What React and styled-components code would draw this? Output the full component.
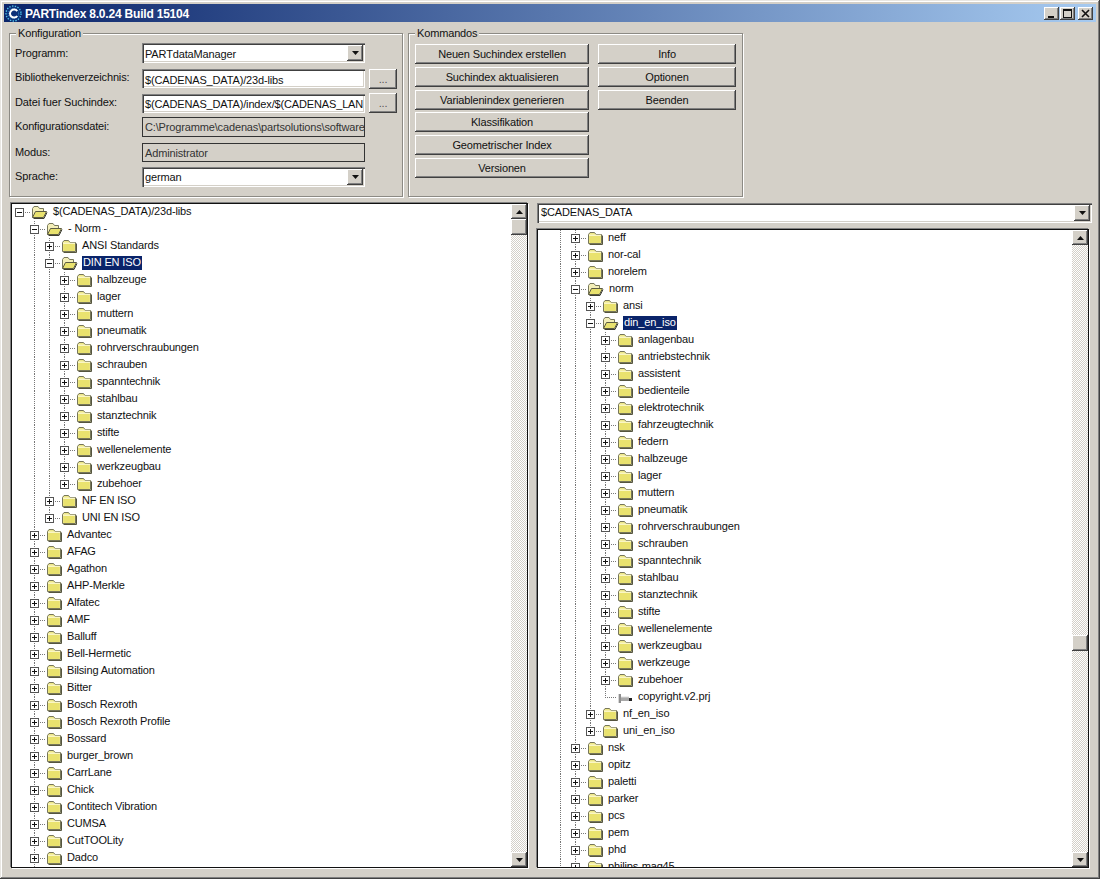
import React from "react";
import styled, { createGlobalStyle } from "styled-components";

const GlobalStyle = createGlobalStyle`
  html, body {
    margin: 0;
    padding: 0;
    overflow: hidden;
    background: #d4d0c8;
  }
  * {
    box-sizing: border-box;
  }
`;

const raised = `
  background: #d4d0c8;
  box-shadow: inset -1px -1px 0 #404040, inset 1px 1px 0 #fff, inset -2px -2px 0 #808080;
`;

const sunken = `
  background: #fff;
  box-shadow: inset 1px 1px 0 #808080, inset 2px 2px 0 #404040, inset -1px -1px 0 #fff, inset -2px -2px 0 #d4d0c8;
`;

const leftTree = [
  {
    name: "$(CADENAS_DATA)/23d-libs",
    open: true,
    more: true,
    children: [
      {
        name: "- Norm -",
        open: true,
        children: [
          { name: "ANSI Standards" },
          {
            name: "DIN EN ISO",
            open: true,
            selected: true,
            children: [
              "halbzeuge", "lager", "muttern", "pneumatik", "rohrverschraubungen", "schrauben", "spanntechnik",
              "stahlbau", "stanztechnik", "stifte", "wellenelemente", "werkzeugbau", "zubehoer",
            ].map((name) => ({ name })),
          },
          { name: "NF EN ISO" },
          { name: "UNI EN ISO" },
        ],
      },
      ...[
        "Advantec", "AFAG", "Agathon", "AHP-Merkle", "Alfatec", "AMF", "Balluff", "Bell-Hermetic",
        "Bilsing Automation", "Bitter", "Bosch Rexroth", "Bosch Rexroth Profile", "Bossard", "burger_brown",
        "CarrLane", "Chick", "Contitech Vibration", "CUMSA", "CutTOOLity", "Dadco",
      ].map((name) => ({ name })),
    ],
  },
];

const rightTree = [
  { name: "neff" },
  { name: "nor-cal" },
  { name: "norelem" },
  {
    name: "norm",
    open: true,
    children: [
      { name: "ansi" },
      {
        name: "din_en_iso",
        open: true,
        selected: true,
        children: [
          ...[
            "anlagenbau", "antriebstechnik", "assistent", "bedienteile", "elektrotechnik", "fahrzeugtechnik",
            "federn", "halbzeuge", "lager", "muttern", "pneumatik", "rohrverschraubungen", "schrauben",
            "spanntechnik", "stahlbau", "stanztechnik", "stifte", "wellenelemente", "werkzeugbau", "werkzeuge",
            "zubehoer",
          ].map((name) => ({ name })),
          { name: "copyright.v2.prj", file: true },
        ],
      },
      { name: "nf_en_iso" },
      { name: "uni_en_iso" },
    ],
  },
  ...["nsk", "opitz", "paletti", "parker", "pcs", "pem", "phd", "philips-mag45"].map((name) => ({ name })),
];

// turns the nested data into rows, keeping which ancestor lines carry on
const flatten = (nodes, guides, continues, isRoot) => {
  let rows = [];
  nodes.forEach((node, i) => {
    const last = i === nodes.length - 1 && !continues;
    rows.push({ ...node, guides, last, isRoot });
    if (node.children) {
      rows = rows.concat(flatten(node.children, [...guides, !last && !isRoot], node.more, false));
    }
  });
  return rows;
};

const Window = styled.div`
  width: 1100px;
  height: 879px;
  padding: 4px 4px 11px;
  display: flex;
  flex-direction: column;
  background: #d4d0c8;
  font-family: "Liberation Sans", Arial, sans-serif;
  font-size: 11px;
  letter-spacing: -0.15px;
  color: #111;
  box-shadow: inset -1px -1px 0 #404040, inset 1px 1px 0 #e8e6e2, inset -2px -2px 0 #808080, inset 2px 2px 0 #fff;
`;

const TitleBar = styled.div`
  height: 18px;
  display: flex;
  align-items: center;
  padding: 0 3px 0 1px;
  background: linear-gradient(to right, #0a246a, #a6caf0);
  color: #fff;
  font-size: 12px;
  font-weight: bold;
  letter-spacing: -0.2px;
`;

const TitleText = styled.div`
  margin: 2px 0 0 3px;
  flex: 1;
`;

const CaptionButton = styled.div`
  ${raised}
  width: 15px;
  height: 13px;
  margin-left: ${(p) => p.$gap}px;
  display: flex;
  align-items: center;
  justify-content: center;
`;

const TopArea = styled.div`
  display: flex;
  gap: 5px;
  margin: 11px 0 0 5px;
`;

const Group = styled.div`
  position: relative;
  width: ${(p) => p.$width}px;
  height: 164px;
  border: 1px solid #8c8a84;
  box-shadow: 1px 1px 0 #fff, inset 1px 1px 0 #fff;
`;

const Legend = styled.div`
  position: absolute;
  top: -7px;
  left: 6px;
  padding: 0 2px;
  line-height: 13px;
  background: #d4d0c8;
`;

const ConfigGrid = styled.div`
  display: grid;
  grid-template-columns: 127px 223px 28px;
  grid-template-rows: 26px 25px 23px 26px 24px 20px;
  padding: 9px 0 0 5px;
  align-items: start;
`;

const FieldLabel = styled.div`
  line-height: 14px;
  margin-top: ${(p) => p.$shift}px;
`;

const Field = styled.div`
  ${sunken}
  height: ${(p) => p.$height || 20}px;
  padding: ${(p) => p.$top || 0}px 3px 0;
  display: flex;
  align-items: center;
  white-space: nowrap;
  overflow: hidden;
`;

const ComboField = styled(Field)`
  padding-right: 2px;
  justify-content: space-between;
`;

const ComboText = styled.span`
  padding: ${(p) => p.$top || 0}px 0 ${(p) => p.$bottom || 0}px ${(p) => p.$left || 0}px;
`;

const ReadOnlyField = styled.div`
  width: 223px;
  height: ${(p) => p.$height || 20}px;
  padding: 0 2px;
  display: flex;
  align-items: center;
  border: 1px solid #333;
  white-space: nowrap;
  overflow: hidden;
  color: #333;
`;

const ArrowButton = styled.div`
  ${raised}
  flex: none;
  width: ${(p) => p.$width || 16}px;
  height: ${(p) => p.$height || 16}px;
  display: flex;
  align-items: center;
  justify-content: center;
`;

const BrowseButton = styled.div`
  ${raised}
  width: 28px;
  height: 20px;
  margin: ${(p) => p.$shift || 0}px 0 0 4px;
  text-align: center;
  line-height: 20px;
  color: #555;
`;

const Commands = styled.div`
  display: flex;
  gap: 9px;
  padding: 10px 0 0 6px;
`;

const CommandColumn = styled.div`
  width: ${(p) => p.$width}px;
  display: flex;
  flex-direction: column;
  gap: 3px;
`;

const CommandButton = styled.div`
  ${raised}
  height: 20px;
  margin-top: ${(p) => p.$pull || 0}px;
  text-align: center;
  line-height: 20px;
`;

const Panes = styled.div`
  flex: 1;
  min-height: 0;
  display: flex;
  gap: 9px;
  margin: 6px 0 0 7px;
`;

const RightColumn = styled.div`
  width: 555px;
  display: flex;
  flex-direction: column;
  gap: 6px;
`;

const PathCombo = styled(ComboField)`
  flex: none;
`;

const TreeBox = styled.div`
  width: ${(p) => p.$width}px;
  flex: ${(p) => (p.$grow ? 1 : "none")};
  min-height: 0;
  display: flex;
  background: #fff;
  border: 1px solid #111;
  box-shadow: -1px -1px 0 #808080, 1px 1px 0 #fff;
`;

const TreeList = styled.div`
  flex: 1;
  min-width: 0;
  overflow: hidden;
`;

const Row = styled.div`
  height: 17px;
  display: flex;
  align-items: center;
  white-space: nowrap;
`;

const dots = "repeating-linear-gradient(to bottom, #777 0 1px, transparent 1px 2px)";
const dotsAcross = "repeating-linear-gradient(to right, #777 0 1px, transparent 1px 2px)";

const Guide = styled.div`
  flex: none;
  width: 15px;
  height: 17px;
  background-image: ${(p) => (p.$on ? dots : "none")};
  background-size: 1px 17px;
  background-position: 7px 0;
  background-repeat: no-repeat;
`;

const Connector = styled.div`
  flex: none;
  width: 19px;
  height: 17px;
  padding-left: 3px;
  display: flex;
  align-items: center;
  background-image: ${(p) => (p.$line === "none" ? "none" : dots)}, ${dotsAcross};
  background-size: 1px ${(p) => (p.$line === "half" ? 9 : 17)}px, 12px 1px;
  background-position: 7px 0, 7px 8px;
  background-repeat: no-repeat;
`;

const Expander = styled.div`
  width: 9px;
  height: 9px;
  border: 1px solid #555;
  background: #fff;
  display: flex;
  align-items: center;
  justify-content: center;
`;

const Label = styled.div`
  margin-left: 4px;
  height: 14px;
  padding: 0 1px;
  line-height: 13px;
  margin-top: -2px;
  background: ${(p) => (p.$selected ? "#0a246a" : "transparent")};
  color: ${(p) => (p.$selected ? "#fff" : "#111")};
`;

const ScrollBar = styled.div`
  flex: none;
  width: 16px;
  display: flex;
  flex-direction: column;
  background-color: #fff;
  background-image: conic-gradient(#d4d0c8 25%, #fff 0 50%, #d4d0c8 0 75%, #fff 0);
  background-size: 2px 2px;
`;

const ScrollThumb = styled.div`
  ${raised}
  flex: none;
  height: 16px;
  margin-top: ${(p) => p.$offset}px;
`;

const ScrollRest = styled.div`
  flex: 1;
`;

const Triangle = ({ up }) => (
  <svg width="7" height="4" viewBox="0 0 7 4">
    <path d={up ? "M3.5 0 7 4H0Z" : "M0 0h7L3.5 4Z"} fill="#111" />
  </svg>
);

const PlusMinus = ({ open }) => (
  <svg width="7" height="7" viewBox="0 0 7 7" style={{ display: "block" }}>
    <path d={open ? "M1 3.5h5" : "M1 3.5h5M3.5 1v5"} stroke="#111" strokeWidth="1" />
  </svg>
);

const ClosedFolder = () => (
  <svg width="16" height="15" viewBox="0 0 16 15" style={{ flex: "none" }}>
    <path d="M1.5 3.5 3 1.5h4.5L9 3.5h5.5v9h-13Z" fill="#efe88a" stroke="#77775a" />
    <path d="M2.5 5h11v7h-11Z" fill="#e9e26e" />
    <path d="M2 4.2h12" stroke="#fffde0" />
    <path d="M15.5 4.5v9h-13" stroke="#55553f" fill="none" />
  </svg>
);

const OpenFolder = () => (
  <svg width="17" height="15" viewBox="0 0 17 15" style={{ flex: "none" }}>
    <path d="M1.5 12.5v-9L3 1.5h4L8.5 3.5h4v3" fill="#f4efb8" stroke="#77775a" />
    <path d="M1.5 12.5 4.5 6.5h11l-3 6Z" fill="#e9e26e" stroke="#5c5c44" />
    <path d="M2.5 13.5h10.5l3-6" stroke="#3e3e30" fill="none" />
  </svg>
);

const FileIcon = () => (
  <svg width="16" height="15" viewBox="0 0 16 15" style={{ flex: "none" }}>
    <path d="M1 4h3v9H1Z" fill="#8e8e8e" />
    <path d="M4 7h8v4H4Z" fill="#a8a8a8" />
    <path d="M4 7h8" stroke="#dcdcdc" />
    <path d="M12 8h3v3h-3Z" fill="#222" />
    <path d="M1.5 4v9" stroke="#d8d8d8" />
  </svg>
);

const AppIcon = () => (
  <svg width="17" height="17" viewBox="0 0 17 17" style={{ flex: "none" }}>
    <circle cx="8.5" cy="8.5" r="7.5" fill="#0c2f78" />
    <circle cx="8.5" cy="8.5" r="7.5" fill="none" stroke="#4fc3e8" strokeWidth="1.4" strokeDasharray="1.4 1.4" />
    <circle cx="8.5" cy="8.5" r="5.2" fill="none" stroke="#2d8cc8" strokeWidth="1" strokeDasharray="1 1.2" />
    <path d="M12.2 6.2A4 4 0 1 0 12.2 11" fill="none" stroke="#fff" strokeWidth="2" />
  </svg>
);

const TreeRow = ({ row }) => (
  <Row>
    {row.guides.map((on, i) => (
      <Guide key={i} $on={on} />
    ))}
    <Connector $line={row.isRoot ? "none" : row.last ? "half" : "full"}>
      {!row.file && (
        <Expander>
          <PlusMinus open={row.open} />
        </Expander>
      )}
    </Connector>
    {row.file ? <FileIcon /> : row.open ? <OpenFolder /> : <ClosedFolder />}
    <Label $selected={row.selected}>{row.name}</Label>
  </Row>
);

const Scroller = ({ offset }) => (
  <ScrollBar>
    <ArrowButton $height={15}>
      <Triangle up />
    </ArrowButton>
    <ScrollThumb $offset={offset} />
    <ScrollRest />
    <ArrowButton $height={15}>
      <Triangle />
    </ArrowButton>
  </ScrollBar>
);

const leftRows = flatten(leftTree, [], false, true);
const rightRows = flatten(rightTree, [false, true], true, false);

const App = () => (
  <Window>
    <GlobalStyle />
    <TitleBar>
      <AppIcon />
      <TitleText>PARTindex 8.0.24 Build 15104</TitleText>
      <CaptionButton $gap={0}>
        <svg width="9" height="9" viewBox="0 0 9 9">
          <path d="M1 7h6v2H1Z" fill="#111" />
        </svg>
      </CaptionButton>
      <CaptionButton $gap={1}>
        <svg width="9" height="9" viewBox="0 0 9 9">
          <path d="M0 0h9v9H0ZM1 2v6h7V2Z" fill="#111" fillRule="evenodd" />
        </svg>
      </CaptionButton>
      <CaptionButton $gap={3}>
        <svg width="9" height="9" viewBox="0 0 9 9">
          <path d="M1 1l7 7M8 1 1 8" stroke="#111" strokeWidth="1.6" />
        </svg>
      </CaptionButton>
    </TitleBar>

    <TopArea>
      <Group $width={394}>
        <Legend>Konfiguration</Legend>
        <ConfigGrid>
          <FieldLabel $shift={3}>Programm:</FieldLabel>
          <ComboField>
            <ComboText $top={2}>PARTdataManager</ComboText>
            <ArrowButton>
              <Triangle />
            </ArrowButton>
          </ComboField>
          <div />

          <FieldLabel $shift={1}>Bibliothekenverzeichnis:</FieldLabel>
          <Field $height={19} $top={2}>$(CADENAS_DATA)/23d-libs</Field>
          <BrowseButton>...</BrowseButton>

          <FieldLabel $shift={1}>Datei fuer Suchindex:</FieldLabel>
          <Field $height={19}>$(CADENAS_DATA)/index/$(CADENAS_LAN</Field>
          <BrowseButton $shift={-1}>...</BrowseButton>

          <FieldLabel $shift={2}>Konfigurationsdatei:</FieldLabel>
          <ReadOnlyField>C:\Programme\cadenas\partsolutions\software</ReadOnlyField>
          <div />

          <FieldLabel $shift={2}>Modus:</FieldLabel>
          <ReadOnlyField $height={19}>Administrator</ReadOnlyField>
          <div />

          <FieldLabel $shift={2}>Sprache:</FieldLabel>
          <ComboField>
            <ComboText>german</ComboText>
            <ArrowButton>
              <Triangle />
            </ArrowButton>
          </ComboField>
          <div />
        </ConfigGrid>
      </Group>

      <Group $width={335}>
        <Legend>Kommandos</Legend>
        <Commands>
          <CommandColumn $width={174}>
            <CommandButton>Neuen Suchindex erstellen</CommandButton>
            <CommandButton>Suchindex aktualisieren</CommandButton>
            <CommandButton>Variablenindex generieren</CommandButton>
            <CommandButton $pull={-1}>Klassifikation</CommandButton>
            <CommandButton>Geometrischer Index</CommandButton>
            <CommandButton>Versionen</CommandButton>
          </CommandColumn>
          <CommandColumn $width={138}>
            <CommandButton>Info</CommandButton>
            <CommandButton>Optionen</CommandButton>
            <CommandButton>Beenden</CommandButton>
          </CommandColumn>
        </Commands>
      </Group>
    </TopArea>

    <Panes>
      <TreeBox $width={517}>
        <TreeList>
          {leftRows.map((row, i) => (
            <TreeRow key={i} row={row} />
          ))}
        </TreeList>
        <Scroller offset={0} />
      </TreeBox>

      <RightColumn>
        <PathCombo>
          <ComboText $bottom={3} $left={1}>$CADENAS_DATA</ComboText>
          <ArrowButton $height={16}>
            <Triangle />
          </ArrowButton>
        </PathCombo>
        <TreeBox $width={552} $grow>
          <TreeList>
            {rightRows.map((row, i) => (
              <TreeRow key={i} row={row} />
            ))}
          </TreeList>
          <Scroller offset={390} />
        </TreeBox>
      </RightColumn>
    </Panes>
  </Window>
);

export default App;
